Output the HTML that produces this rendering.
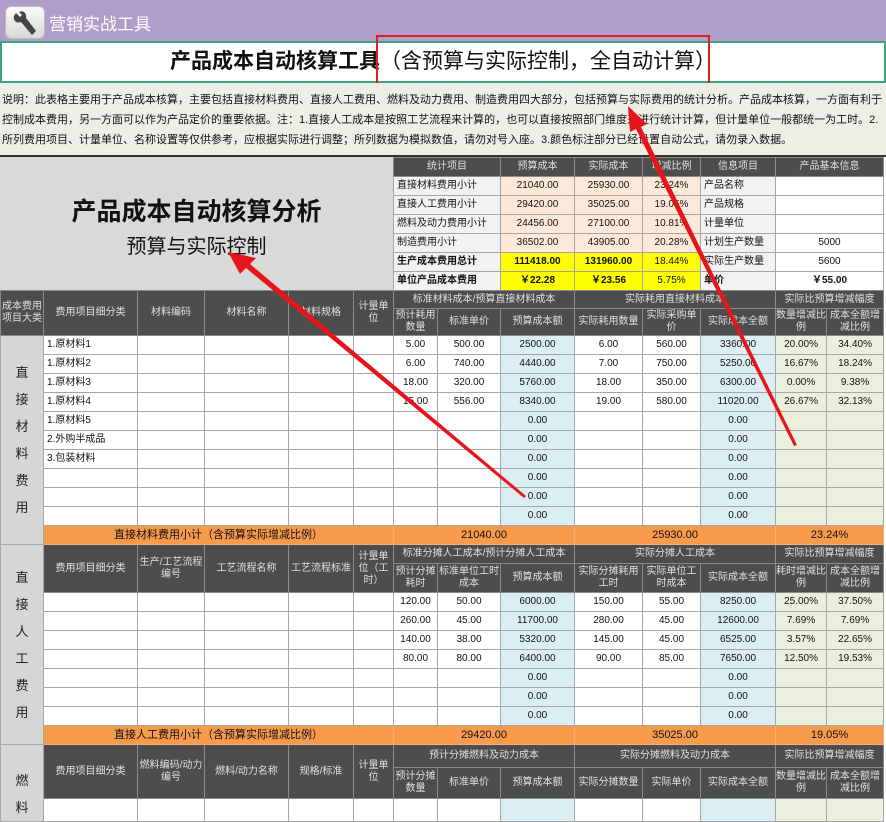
<!DOCTYPE html>
<html><head><meta charset="utf-8">
<style>
*{box-sizing:border-box;margin:0;padding:0}
body{width:886px;height:795px;overflow:hidden;position:relative;background:#fff;font-family:"Liberation Sans","Noto Sans CJK SC",sans-serif;color:#111}
.abs{position:absolute}
table{border-collapse:collapse;table-layout:fixed;position:absolute}
td{border:1px solid #a6a6a6;font-size:10px;text-align:center;vertical-align:middle;overflow:hidden;white-space:nowrap;line-height:12px;padding:0}
.h{background:#4d4d4d;color:#e0e0e0;white-space:normal;border-color:#8a8a8a}
.l{text-align:left;padding-left:3px}
.b{background:#dbeef4}
.g{background:#ebf0de}
.o{background:#f79a4c;border-color:#f0b080;font-size:11px}
.cat{background:#d6d6d6;font-size:13px;line-height:27px;white-space:normal;color:#222}
.lab{background:#f2f2f2;text-align:left;padding-left:3px}
.pe{background:#fde9d9}
.y{background:#ffff00;font-weight:bold}
</style></head><body>
<div class="abs" style="left:0;top:0;width:886px;height:41px;background:#b19dc9"></div>
<div class="abs" style="left:5px;top:6px;width:40px;height:33px;border-radius:6px;background:linear-gradient(#fafafa,#d8d8d8);border:1px solid #bbb"></div>
<svg class="abs" style="left:10px;top:9px" width="30" height="28" viewBox="0 0 30 28"><path d="M6 4 L10 8 L12 6 L9 3 C13 1 17 4 16 9 L26 22 L22 26 L11 13 C6 15 3 11 4 7 Z" fill="#444"/></svg>
<div class="abs" style="left:49px;top:10px;font-size:17px;color:#fff">营销实战工具</div>
<div class="abs" style="left:0;top:41px;width:886px;height:42px;border:2px solid #3aa57a;background:#fff"></div>
<div class="abs" style="left:0;top:49px;width:886px;text-align:center;font-size:21px;line-height:26px"><b>产品成本自动核算工具</b>（含预算与实际控制，全自动计算）</div>
<div class="abs" style="left:376px;top:35px;width:334px;height:54px;border:2px solid #e02020"></div>
<div class="abs" style="left:0;top:83px;width:886px;height:72px;background:#efeee6"></div>
<div class="abs" style="left:2px;top:90px;width:884px;font-size:11px;line-height:20px;color:#111">说明：此表格主要用于产品成本核算，主要包括直接材料费用、直接人工费用、燃料及动力费用、制造费用四大部分，包括预算与实际费用的统计分析。产品成本核算，一方面有利于控制成本费用，另一方面可以作为产品定价的重要依据。注：1.直接人工成本是按照工艺流程来计算的，也可以直接按照部门维度来进行统计计算，但计量单位一般都统一为工时。2.所列费用项目、计量单位、名称设置等仅供参考，应根据实际进行调整；所列数据为模拟数值，请勿对号入座。3.颜色标注部分已经设置自动公式，请勿录入数据。</div>
<div class="abs" style="left:0;top:155px;width:886px;height:2px;background:#333"></div>
<div class="abs" style="left:0;top:157px;width:393px;height:133px;background:#d9d9d9"></div>
<div class="abs" style="left:0;top:192px;width:393px;text-align:center;font-size:25px;font-weight:bold">产品成本自动核算分析</div>
<div class="abs" style="left:0;top:230px;width:393px;text-align:center;font-size:20px">预算与实际控制</div>

<table style="left:393px;top:157px;width:490px">
<colgroup><col style="width:107px"><col style="width:74px"><col style="width:68px"><col style="width:58px"><col style="width:75px"><col style="width:108px"></colgroup>
<tr style="height:19px"><td class="h">统计项目</td><td class="h">预算成本</td><td class="h">实际成本</td><td class="h">增减比例</td><td class="h">信息项目</td><td class="h">产品基本信息</td></tr>
<tr style="height:19px"><td class="lab">直接材料费用小计</td><td class="pe">21040.00</td><td class="pe">25930.00</td><td class="pe">23.24%</td><td class="lab">产品名称</td><td></td></tr>
<tr style="height:19px"><td class="lab">直接人工费用小计</td><td class="pe">29420.00</td><td class="pe">35025.00</td><td class="pe">19.05%</td><td class="lab">产品规格</td><td></td></tr>
<tr style="height:19px"><td class="lab">燃料及动力费用小计</td><td class="pe">24456.00</td><td class="pe">27100.00</td><td class="pe">10.81%</td><td class="lab">计量单位</td><td></td></tr>
<tr style="height:19px"><td class="lab">制造费用小计</td><td class="pe">36502.00</td><td class="pe">43905.00</td><td class="pe">20.28%</td><td class="lab">计划生产数量</td><td>5000</td></tr>
<tr style="height:19px"><td class="lab" style="font-weight:bold">生产成本费用总计</td><td class="y">111418.00</td><td class="y">131960.00</td><td class="y" style="font-weight:normal">18.44%</td><td class="lab">实际生产数量</td><td>5600</td></tr>
<tr style="height:19px"><td class="lab" style="font-weight:bold">单位产品成本费用</td><td class="y">￥22.28</td><td class="y">￥23.56</td><td class="y" style="font-weight:normal">5.75%</td><td class="lab" style="font-weight:bold">单价</td><td style="font-weight:bold">￥55.00</td></tr>
</table>

<table style="left:0;top:290px;width:883px">
<colgroup><col style="width:43px"><col style="width:94px"><col style="width:67px"><col style="width:84px"><col style="width:65px"><col style="width:40px"><col style="width:44px"><col style="width:63px"><col style="width:74px"><col style="width:68px"><col style="width:58px"><col style="width:75px"><col style="width:51px"><col style="width:57px"></colgroup>
<tr style="height:18px"><td class="h" rowspan="2">成本费用项目大类</td><td class="h" rowspan="2">费用项目细分类</td><td class="h" rowspan="2">材料编码</td><td class="h" rowspan="2">材料名称</td><td class="h" rowspan="2">材料规格</td><td class="h" rowspan="2">计量单位</td><td class="h" colspan="3">标准材料成本/预算直接材料成本</td><td class="h" colspan="3">实际耗用直接材料成本</td><td class="h" colspan="2">实际比预算增减幅度</td></tr>
<tr style="height:27px"><td class="h">预计耗用数量</td><td class="h">标准单价</td><td class="h">预算成本额</td><td class="h">实际耗用数量</td><td class="h">实际采购单价</td><td class="h">实际成本全额</td><td class="h">数量增减比例</td><td class="h">成本全额增减比例</td></tr>
<tr style="height:19px"><td class="cat" rowspan="11">直<br>接<br>材<br>料<br>费<br>用</td><td class="l">1.原材料1</td><td></td><td></td><td></td><td></td><td>5.00</td><td>500.00</td><td class="b">2500.00</td><td>6.00</td><td>560.00</td><td class="b">3360.00</td><td class="g">20.00%</td><td class="g">34.40%</td></tr>
<tr style="height:19px"><td class="l">1.原材料2</td><td></td><td></td><td></td><td></td><td>6.00</td><td>740.00</td><td class="b">4440.00</td><td>7.00</td><td>750.00</td><td class="b">5250.00</td><td class="g">16.67%</td><td class="g">18.24%</td></tr>
<tr style="height:19px"><td class="l">1.原材料3</td><td></td><td></td><td></td><td></td><td>18.00</td><td>320.00</td><td class="b">5760.00</td><td>18.00</td><td>350.00</td><td class="b">6300.00</td><td class="g">0.00%</td><td class="g">9.38%</td></tr>
<tr style="height:19px"><td class="l">1.原材料4</td><td></td><td></td><td></td><td></td><td>15.00</td><td>556.00</td><td class="b">8340.00</td><td>19.00</td><td>580.00</td><td class="b">11020.00</td><td class="g">26.67%</td><td class="g">32.13%</td></tr>
<tr style="height:19px"><td class="l">1.原材料5</td><td></td><td></td><td></td><td></td><td></td><td></td><td class="b">0.00</td><td></td><td></td><td class="b">0.00</td><td class="g"></td><td class="g"></td></tr>
<tr style="height:19px"><td class="l">2.外购半成品</td><td></td><td></td><td></td><td></td><td></td><td></td><td class="b">0.00</td><td></td><td></td><td class="b">0.00</td><td class="g"></td><td class="g"></td></tr>
<tr style="height:19px"><td class="l">3.包装材料</td><td></td><td></td><td></td><td></td><td></td><td></td><td class="b">0.00</td><td></td><td></td><td class="b">0.00</td><td class="g"></td><td class="g"></td></tr>
<tr style="height:19px"><td></td><td></td><td></td><td></td><td></td><td></td><td></td><td class="b">0.00</td><td></td><td></td><td class="b">0.00</td><td class="g"></td><td class="g"></td></tr>
<tr style="height:19px"><td></td><td></td><td></td><td></td><td></td><td></td><td></td><td class="b">0.00</td><td></td><td></td><td class="b">0.00</td><td class="g"></td><td class="g"></td></tr>
<tr style="height:19px"><td></td><td></td><td></td><td></td><td></td><td></td><td></td><td class="b">0.00</td><td></td><td></td><td class="b">0.00</td><td class="g"></td><td class="g"></td></tr>
<tr style="height:19px"><td class="o" colspan="5">直接材料费用小计（含预算实际增减比例）</td><td class="o" colspan="3">21040.00</td><td class="o" colspan="3">25930.00</td><td class="o" colspan="2">23.24%</td></tr>

<tr style="height:19px"><td class="cat" rowspan="10">直<br>接<br>人<br>工<br>费<br>用</td><td class="h" rowspan="2">费用项目细分类</td><td class="h" rowspan="2">生产/工艺流程编号</td><td class="h" rowspan="2">工艺流程名称</td><td class="h" rowspan="2">工艺流程标准</td><td class="h" rowspan="2">计量单位（工时）</td><td class="h" colspan="3">标准分摊人工成本/预计分摊人工成本</td><td class="h" colspan="3">实际分摊人工成本</td><td class="h" colspan="2">实际比预算增减幅度</td></tr>
<tr style="height:29px"><td class="h">预计分摊耗时</td><td class="h">标准单位工时成本</td><td class="h">预算成本额</td><td class="h">实际分摊耗用工时</td><td class="h">实际单位工时成本</td><td class="h">实际成本全额</td><td class="h">耗时增减比例</td><td class="h">成本全额增减比例</td></tr>
<tr style="height:19px"><td></td><td></td><td></td><td></td><td></td><td>120.00</td><td>50.00</td><td class="b">6000.00</td><td>150.00</td><td>55.00</td><td class="b">8250.00</td><td class="g">25.00%</td><td class="g">37.50%</td></tr>
<tr style="height:19px"><td></td><td></td><td></td><td></td><td></td><td>260.00</td><td>45.00</td><td class="b">11700.00</td><td>280.00</td><td>45.00</td><td class="b">12600.00</td><td class="g">7.69%</td><td class="g">7.69%</td></tr>
<tr style="height:19px"><td></td><td></td><td></td><td></td><td></td><td>140.00</td><td>38.00</td><td class="b">5320.00</td><td>145.00</td><td>45.00</td><td class="b">6525.00</td><td class="g">3.57%</td><td class="g">22.65%</td></tr>
<tr style="height:19px"><td></td><td></td><td></td><td></td><td></td><td>80.00</td><td>80.00</td><td class="b">6400.00</td><td>90.00</td><td>85.00</td><td class="b">7650.00</td><td class="g">12.50%</td><td class="g">19.53%</td></tr>
<tr style="height:19px"><td></td><td></td><td></td><td></td><td></td><td></td><td></td><td class="b">0.00</td><td></td><td></td><td class="b">0.00</td><td class="g"></td><td class="g"></td></tr>
<tr style="height:19px"><td></td><td></td><td></td><td></td><td></td><td></td><td></td><td class="b">0.00</td><td></td><td></td><td class="b">0.00</td><td class="g"></td><td class="g"></td></tr>
<tr style="height:19px"><td></td><td></td><td></td><td></td><td></td><td></td><td></td><td class="b">0.00</td><td></td><td></td><td class="b">0.00</td><td class="g"></td><td class="g"></td></tr>
<tr style="height:19px"><td class="o" colspan="5">直接人工费用小计（含预算实际增减比例）</td><td class="o" colspan="3">29420.00</td><td class="o" colspan="3">35025.00</td><td class="o" colspan="2">19.05%</td></tr>

<tr style="height:19px"><td class="cat" rowspan="3" style="vertical-align:top;padding-top:22px">燃<br>料</td><td class="h" rowspan="2">费用项目细分类</td><td class="h" rowspan="2">燃料编码/动力编号</td><td class="h" rowspan="2">燃料/动力名称</td><td class="h" rowspan="2">规格/标准</td><td class="h" rowspan="2">计量单位</td><td class="h" colspan="3">预计分摊燃料及动力成本</td><td class="h" colspan="3">实际分摊燃料及动力成本</td><td class="h" colspan="2">实际比预算增减幅度</td></tr>
<tr style="height:27px"><td class="h">预计分摊数量</td><td class="h">标准单价</td><td class="h">预算成本额</td><td class="h">实际分摊数量</td><td class="h">实际单价</td><td class="h">实际成本全额</td><td class="h">数量增减比例</td><td class="h">成本全额增减比例</td></tr>
<tr style="height:19px"><td></td><td></td><td></td><td></td><td></td><td></td><td></td><td class="b"></td><td></td><td></td><td class="b"></td><td class="g"></td><td class="g"></td></tr>
</table>

<svg class="abs" style="left:0;top:0" width="886" height="795">
<polygon points="628,106 647,124 641,127 797,445 794,446 636,129 630,132" fill="#e8141b"/>
<polygon points="228,252 256,258 250,264 526,496 524,498 246,268 240,274" fill="#e8141b"/>
</svg>
</body></html>
